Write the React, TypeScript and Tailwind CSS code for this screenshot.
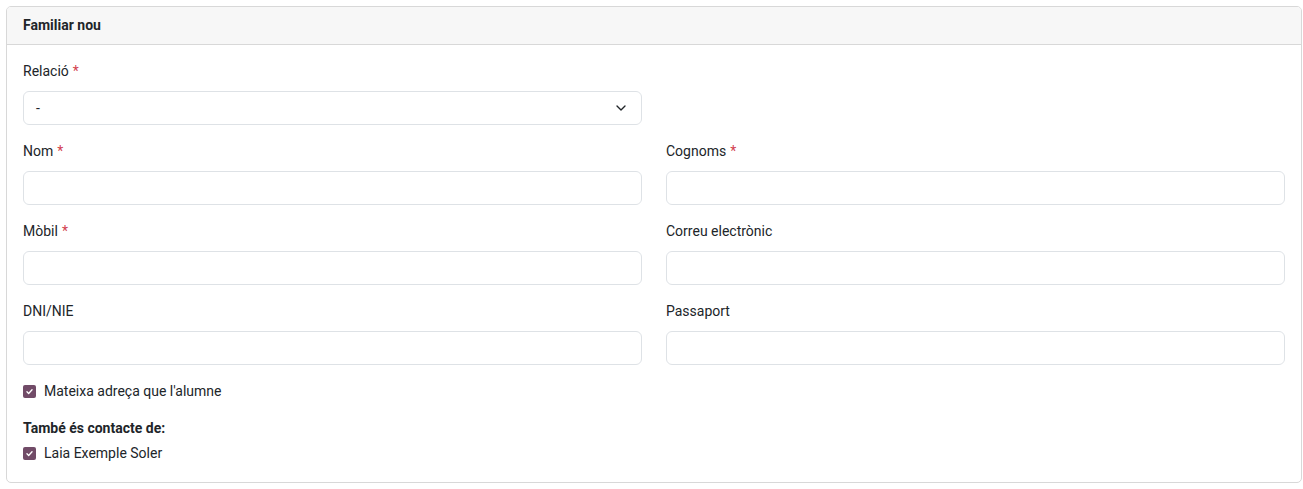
import { ChevronDown } from 'lucide-react';

interface FieldProps {
  label: string;
  required?: boolean;
  children?: React.ReactNode;
}

const Field = (props: FieldProps) => {
  return (
    <div className="flex flex-col">
      <div className="h-5 leading-5 mb-[10px] text-[14px] text-[#212529]">
        {props.label}
        {props.required && <span className="text-[#d23f4f] ml-1">*</span>}
      </div>
      {props.children ?? (
        <input className="h-[34px] w-full rounded-md border border-[#dee2e6] bg-white px-3 text-[14px] outline-none" />
      )}
    </div>
  );
};

const Check = (props: { label: string }) => {
  return (
    <label className="flex items-center h-5 text-[14px] text-[#212529]">
      <span className="w-[13px] h-[13px] rounded-[2px] bg-[#714b67] flex items-center justify-center mr-2">
        <svg width="9" height="9" viewBox="0 0 16 16" fill="none">
          <path
            d="M3.5 8.5l3 3 6-6.5"
            stroke="white"
            strokeWidth="2.4"
            strokeLinecap="round"
            strokeLinejoin="round"
          />
        </svg>
      </span>
      {props.label}
    </label>
  );
};

const App = () => {
  return (
    <div
      className="pt-[6px] pl-[6px] pr-[1px] pb-[6px] bg-white"
      style={{ fontFamily: 'Roboto, "Liberation Sans", sans-serif' }}
    >
      <div className="border border-[#d8d8d8] rounded-[5px] overflow-hidden">
        <div className="h-[38px] bg-[#f7f7f7] border-b border-[#d8d8d8] flex items-center px-4">
          <span className="text-[14px] font-bold text-[#212529]">Familiar nou</span>
        </div>
        <div className="px-4 pt-4 pb-[19px]">
          <div className="grid grid-cols-2 gap-x-6 gap-y-4">
            <Field label="Relació" required>
              <div className="h-[34px] w-full rounded-md border border-[#dee2e6] bg-white px-3 flex items-center justify-between text-[14px] text-[#212529]">
                <span>-</span>
                <ChevronDown size={16} strokeWidth={2} className="text-[#212529]" />
              </div>
            </Field>
            <div />
            <Field label="Nom" required />
            <Field label="Cognoms" required />
            <Field label="Mòbil" required />
            <Field label="Correu electrònic" />
            <Field label="DNI/NIE" />
            <Field label="Passaport" />
          </div>
          <div className="mt-4">
            <Check label="Mateixa adreça que l'alumne" />
          </div>
          <div className="mt-[17px] h-5 leading-5 text-[14px] font-bold text-[#212529]">
            També és contacte de:
          </div>
          <div className="mt-[5px]">
            <Check label="Laia Exemple Soler" />
          </div>
        </div>
      </div>
    </div>
  );
};

export default App;
